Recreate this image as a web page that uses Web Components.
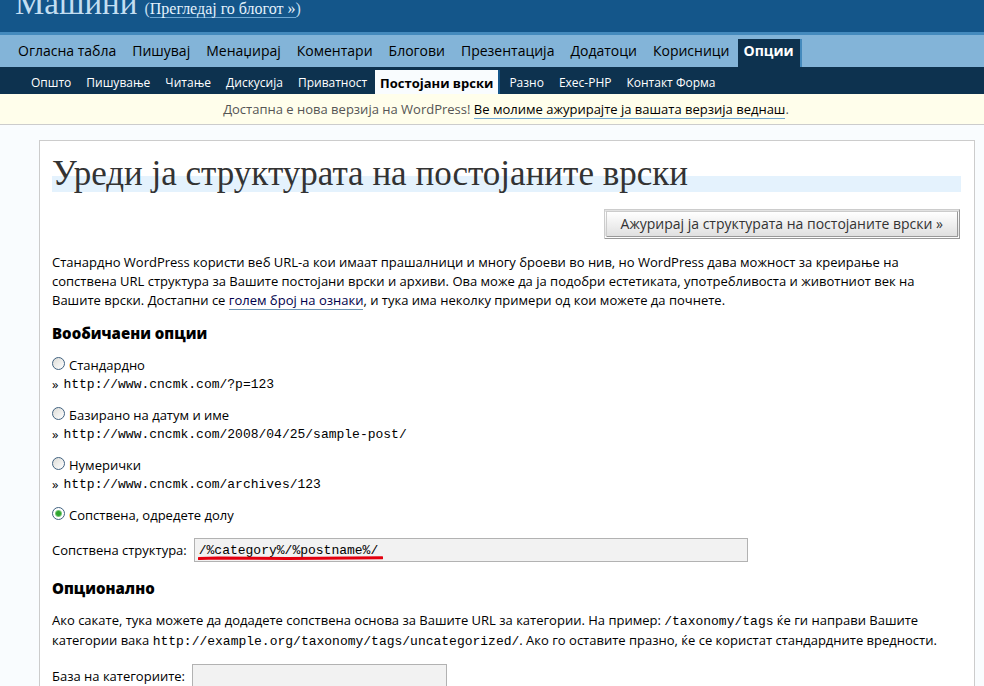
<!DOCTYPE html>
<html lang="mk">
<head>
<meta charset="utf-8">
<title>Постојани врски</title>
<style>
html { scrollbar-width: none; }
body { margin: 0; background: #f9fcfe; color: #000; font: 13px/19px "Open Sans", "Noto Sans", sans-serif; }
</style>
</head>
<body>
<permalinks-page></permalinks-page>
<script>
const define = (name, markup) => customElements.define(name, class extends HTMLElement {
  connectedCallback() {
    if (this.shadowRoot) return;
    this.attachShadow({ mode: 'open' }).innerHTML = markup;
  }
});

define('site-head', `
<style>
:host { display: flex; align-items: baseline; gap: 7px; height: 32px; padding-left: 15px; overflow: hidden;
  background: #14568a; border-bottom: 3px solid #448abd; color: #c3def1; font-family: "Liberation Serif", serif; }
h1 { margin: -17px 0 0; font-size: 33px; line-height: 40px; font-weight: normal; }
span { font-size: 16px; line-height: 18px; }
a { color: #e4f2fd; text-decoration: none; border-bottom: 1px solid #6da6d1; }
</style>
<h1>Машини</h1><span>(<a href="#blog">Прегледај го блогот »</a>)</span>`);

class NavBar extends HTMLElement {
  connectedCallback() {
    const current = this.getAttribute('current');
    const links = this.getAttribute('items').split('|').map(t =>
      `<a href="#"${t === current ? ' class="current" aria-current="page"' : ''}>${t}</a>`).join('');
    this.attachShadow({ mode: 'open' }).innerHTML = `<style>${this.constructor.css}</style><nav>${links}</nav>`;
  }
}
customElements.define('main-menu', class extends NavBar {
  static css = `
:host { display: block; background: #83b4d8; font-size: 14px; line-height: 24px; }
nav { display: flex; align-items: flex-end; height: 32px; padding-left: 10px; }
a { color: #000; text-decoration: none; padding: 0 8px 4px; white-space: nowrap; }
.current { background: #0d324f; color: #fff; font-weight: bold; padding: 0 6px 4px; border-right: 2px solid #448abd; }`;
});
customElements.define('sub-menu', class extends NavBar {
  static css = `
:host { display: block; background: #0d324f; font-size: 12px; line-height: 18px; }
nav { display: flex; align-items: flex-end; height: 27px; padding-left: 24px; }
a { color: #fff; text-decoration: none; padding: 0 7px 2px; white-space: nowrap; margin-right: 1px; }
.current { background: #f9fcfe; color: #000; font-weight: bold; font-size: 13px; padding: 4px 5px 2px; border-right: 2px solid #14568a; margin-right: 2px; }`;
});

define('update-notice', `
<style>
:host { display: block; padding: 6px 0 5px 28px; margin-bottom: 15px; text-align: center; background: #fffeeb; color: #555;
  border-bottom: 1px solid #ccc; }
::slotted(a) { color: #000; text-decoration: none; border-bottom: 1px solid #6da6d1; }
</style><slot></slot>`);

define('content-panel', `
<style>
:host { display: block; margin: 0 9px 0 39px; padding: 12px 13px 40px 12px; background: #fff; border: 1px solid #ccc; }
</style><slot></slot>`);

define('page-title', `
<style>
:host { display: block; }
h2 { margin: 0; padding-top: 3px; font: 35px/36px "Liberation Serif", serif; color: #333;
  background: linear-gradient(#e4f2fd, #e4f2fd) 0 100% / 100% 16px no-repeat; }
</style><h2><slot></slot></h2>`);

define('submit-button', `
<style>
:host { display: flex; justify-content: flex-end; margin: 17px 1px 14px 0; }
button { font: inherit; font-size: 14px; line-height: 20px; height: 30px; padding: 0 14px; color: #333;
  background: linear-gradient(#fff, #e0e0e0); border: 3px double #999; border-left-color: #ccc; border-top-color: #ccc; }
</style><button type="submit"><slot></slot></button>`);

define('section-title', `
<style>
:host { display: block; margin: 13px 0; }
h3 { margin: 0; font-size: 15px; line-height: 20px; font-weight: 800; }
</style><h3><slot></slot></h3>`);

customElements.define('structure-option', class extends HTMLElement {
  connectedCallback() {
    const sample = this.getAttribute('sample');
    this.attachShadow({ mode: 'open' }).innerHTML = `
<style>
:host { display: block; margin-bottom: 12px; }
label { display: flex; align-items: center; gap: 4px; }
input { appearance: none; width: 13px; height: 13px; margin: 0 0 4px; border: 1px solid #3f617f; border-radius: 50%;
  background: linear-gradient(135deg, #dcdcd7, #fff); }
input:checked { background: radial-gradient(circle, #2fa52f 0 2px, #79c879 3px, #fff 4px); }
code { font: 13px/19px "Liberation Mono", monospace; }
div { display: flex; gap: 5px; }
</style>
<label><input type="radio" name="selection" ${this.hasAttribute('checked') ? 'checked' : ''}><slot></slot></label>
${sample ? `<div><span>»</span><code>${sample}</code></div>` : ''}`;
  }
});

customElements.define('text-field', class extends HTMLElement {
  connectedCallback() {
    this.attachShadow({ mode: 'open' }).innerHTML = `
<style>
:host { display: block; margin-top: 13px; }
label { display: flex; align-items: center; gap: 7px; }
.box { position: relative; width: var(--field, 50%); }
input { display: block; box-sizing: border-box; width: 100%; height: 24px; padding: 0 4px; background: #f2f2f2;
  border: 1px solid #b2b2b2; color: #000; font: 13px "Liberation Mono", monospace; }
svg { position: absolute; left: 4px; bottom: 2px; width: 185px; height: 4px; }
</style>
<label><span><slot></slot></span><span class="box"><input type="text" value="${this.getAttribute('value') || ''}">
${this.hasAttribute('marked') ? '<svg viewBox="0 0 185 4" aria-hidden="true"><path d="M1 2.5 20 2 90 2.5 184 1.8" fill="none" stroke="#e3000f" stroke-width="3" stroke-linecap="round"/></svg>' : ''}</span></label>`;
  }
});

define('text-block', `
<style>
:host { display: block; }
p { margin: 0; }
::slotted(a) { color: #00004b; text-decoration: none; border-bottom: 1px solid #6d96b4; }
::slotted(code) { font: 13px/19px "Liberation Mono", monospace; }
</style><p><slot></slot></p>`);

define('permalinks-page', `
<style>
:host { display: block; }
.custom { --field: 61%; margin-bottom: 16px; }
.base { --field: 28%; }
</style>
<site-head></site-head>
<main-menu current="Опции" items="Огласна табла|Пишувај|Менаџирај|Коментари|Блогови|Презентација|Додатоци|Корисници|Опции"></main-menu>
<sub-menu current="Постојани врски" items="Општо|Пишување|Читање|Дискусија|Приватност|Постојани врски|Разно|Exec-PHP|Контакт Форма"></sub-menu>
<update-notice>Достапна е нова верзија на WordPress! <a href="#update">Ве молиме ажурирајте ја вашата верзија веднаш</a>.</update-notice>
<content-panel>
  <page-title>Уреди ја структурата на постојаните врски</page-title>
  <submit-button>Ажурирај ја структурата на постојаните врски »</submit-button>
  <text-block>Станардно WordPress користи веб URL-а кои имаат прашалници и многу броеви во нив, но WordPress дава можност за креирање на сопствена URL структура за Вашите постојани врски и архиви. Ова може да ја подобри естетиката, употребливоста и животниот век на Вашите врски. Достапни се <a href="#tags">голем број на ознаки</a>, и тука има неколку примери од кои можете да почнете.</text-block>
  <section-title>Вообичаени опции</section-title>
  <structure-option sample="http://www.cncmk.com/?p=123">Стандардно</structure-option>
  <structure-option sample="http://www.cncmk.com/2008/04/25/sample-post/">Базирано на датум и име</structure-option>
  <structure-option sample="http://www.cncmk.com/archives/123">Нумерички</structure-option>
  <structure-option checked>Сопствена, одредете долу</structure-option>
  <text-field class="custom" marked value="/%category%/%postname%/">Сопствена структура:</text-field>
  <section-title>Опционално</section-title>
  <text-block>Ако сакате, тука можете да додадете сопствена основа за Вашите URL за категории. На пример: <code>/taxonomy/tags</code> ќе ги направи Вашите категории вака <code>http://example.org/taxonomy/tags/uncategorized/</code>. Ако го оставите празно, ќе се користат стандардните вредности.</text-block>
  <text-field class="base">База на категориите:</text-field>
</content-panel>`);
</script>
</body>
</html>
